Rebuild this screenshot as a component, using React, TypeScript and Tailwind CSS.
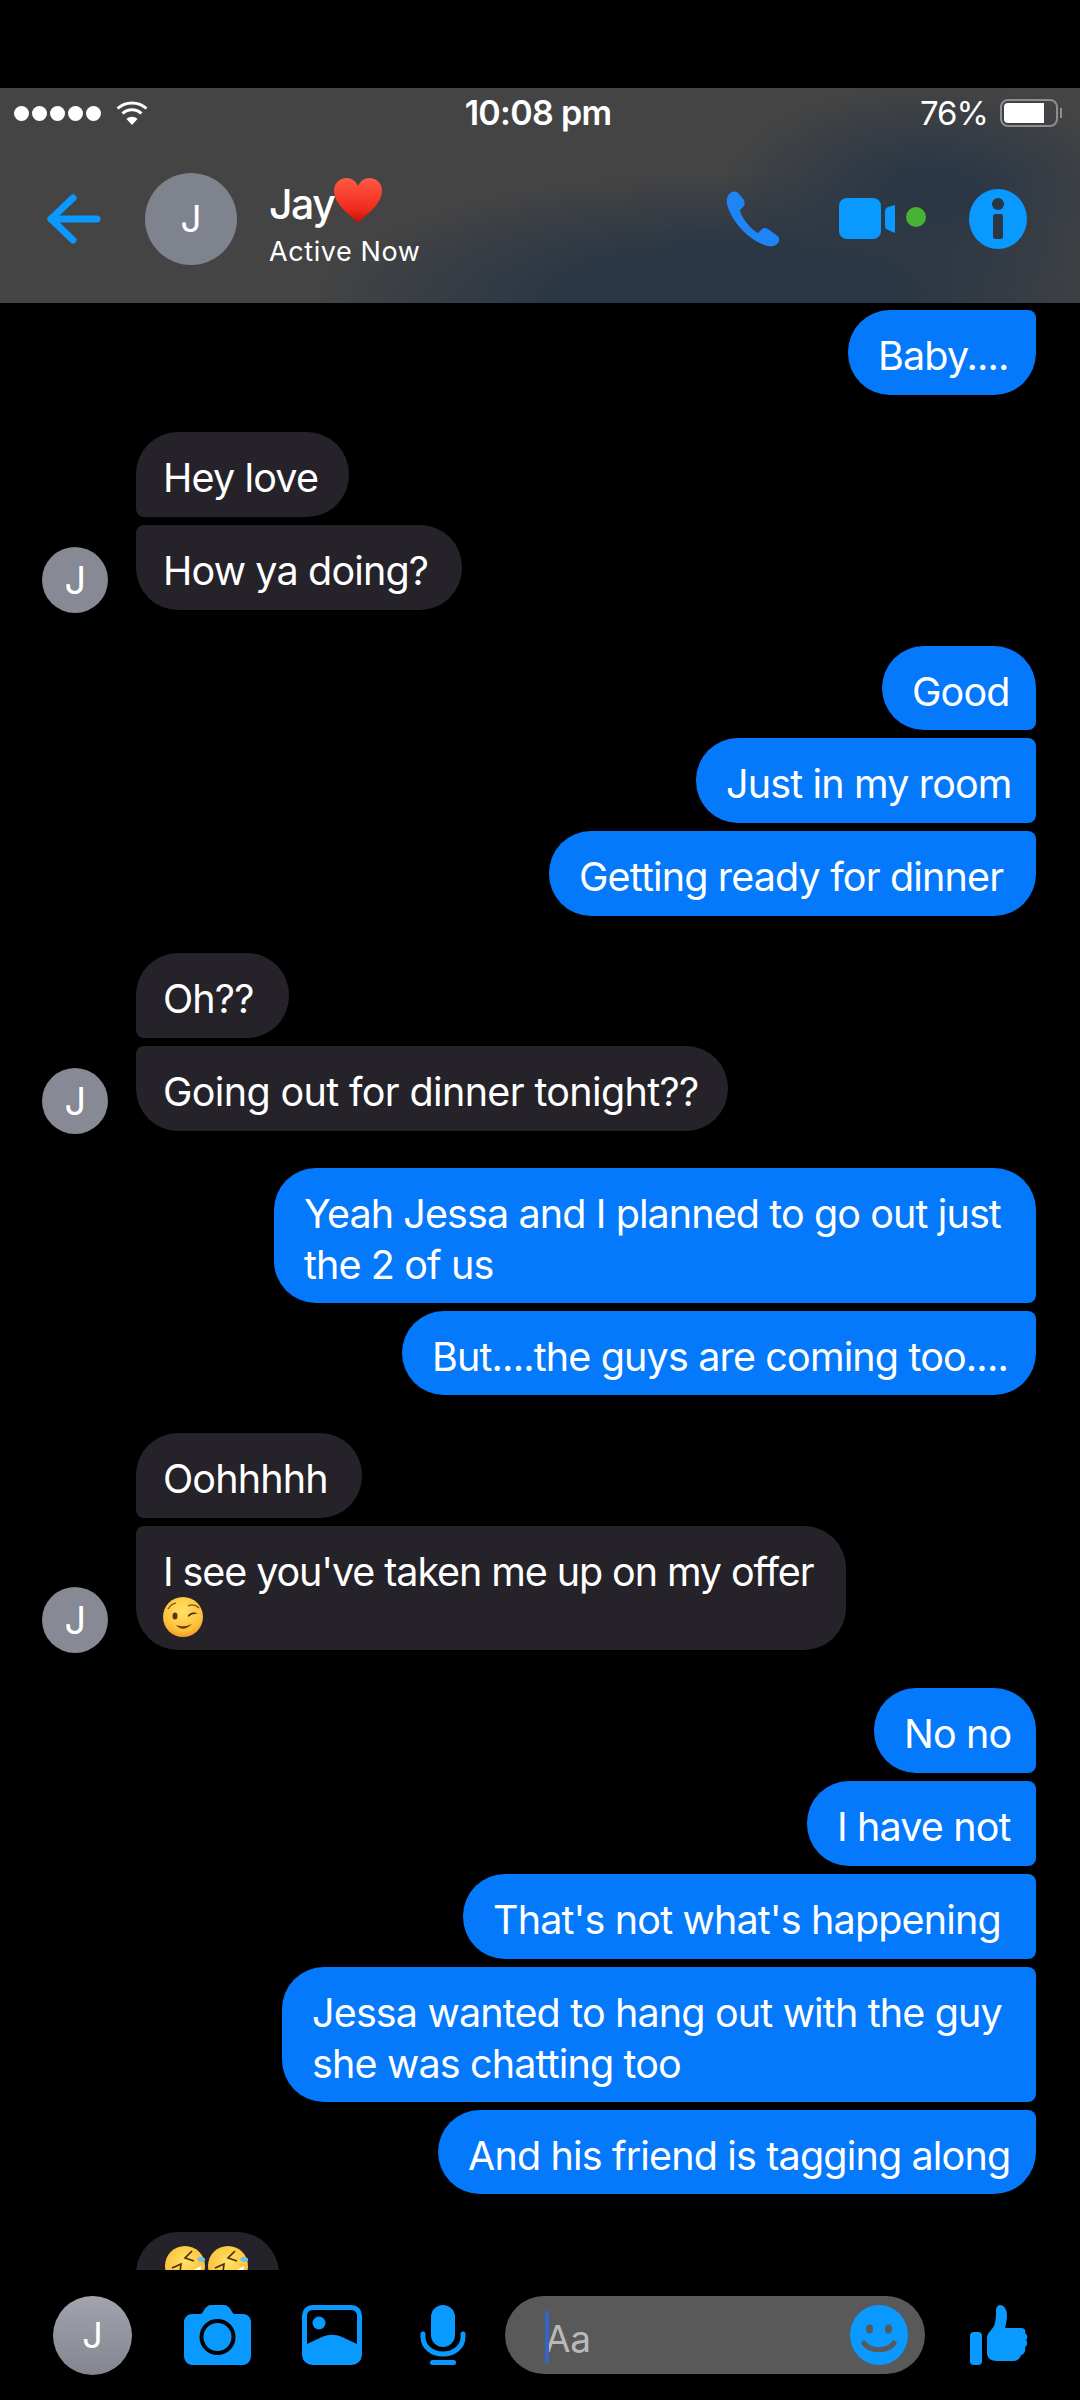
import type { ReactNode } from "react";

const font = "font-['Inter','Liberation_Sans',sans-serif]";

const Heart = () => (
  <svg width="50" height="48" viewBox="0 0 50 48" className="-ml-[1px] mt-[-6px]">
    <defs>
      <linearGradient id="heart" x1="0" y1="0" x2="0" y2="1">
        <stop offset="0" stopColor="#ff5a45" />
        <stop offset="0.7" stopColor="#f02a1c" />
        <stop offset="1" stopColor="#b81408" />
      </linearGradient>
    </defs>
    <path
      d="M25 46C18 39 2 28 1 15C.5 6 7 1 13.500 1C18.500 1 23 4 25 9C27 4 31.500 1 36.500 1C43 1 49.500 6 49 15C48 28 32 39 25 46Z"
      fill="url(#heart)"
    />
  </svg>
);

const WinkEmoji = () => (
  <svg width="40" height="40" viewBox="0 0 40 40">
    <defs>
      <radialGradient id="wink" cx="0.5" cy="0.35" r="0.7">
        <stop offset="0" stopColor="#ffe169" />
        <stop offset="0.7" stopColor="#fdc23a" />
        <stop offset="1" stopColor="#ee8f1c" />
      </radialGradient>
    </defs>
    <circle cx="20" cy="20" r="20" fill="url(#wink)" />
    <path d="M5 12Q8 7 13 6" stroke="#7a4a12" strokeWidth="1.200" fill="none" />
    <path d="M25 9Q31 6 36 11" stroke="#7a4a12" strokeWidth="1.200" fill="none" />
    <ellipse cx="12" cy="19" rx="2.500" ry="3.500" fill="#5a3410" />
    <path d="M25 18Q30 13 35 17Q30 16 25 20Z" fill="#5a3410" />
    <path d="M13 28Q20 36 29 27Q21 31 13 28Z" fill="#6b3d10" />
  </svg>
);

const RoflEmoji = () => (
  <svg width="40" height="40" viewBox="0 0 40 40" className="shrink-0">
    <defs>
      <radialGradient id="rofl" cx="0.5" cy="0.4" r="0.7">
        <stop offset="0" stopColor="#ffe169" />
        <stop offset="0.75" stopColor="#fdc23a" />
        <stop offset="1" stopColor="#ee8f1c" />
      </radialGradient>
    </defs>
    <circle cx="20" cy="20" r="20" fill="url(#rofl)" />
    <path d="M7 22L16 18L15 26" stroke="#4a2a0c" strokeWidth="1.600" fill="none" />
    <path d="M27 5L20 12L29 15" stroke="#4a2a0c" strokeWidth="1.600" fill="none" />
    <path d="M14 33L36 20L34 34Z" fill="#fff" />
    <path d="M32 13C34 10 38 11 41 13C39 17 34 17 32 13Z" fill="#6cc4e8" />
  </svg>
);

const Avatar = ({ className, text }: { className: string; text: string }) => (
  <div className={`flex items-center justify-center rounded-full text-white shrink-0 ${className} ${text}`}>
    J
  </div>
);

type Pos = "first" | "mid" | "last";

const ownShape: Record<Pos, string> = {
  first: "rounded-[42px] rounded-br-[8px]",
  mid: "rounded-l-[42px] rounded-r-[8px]",
  last: "rounded-[42px] rounded-tr-[8px]",
};

const theirShape: Record<Pos, string> = {
  first: "rounded-[42px] rounded-bl-[8px]",
  mid: "rounded-r-[42px] rounded-l-[8px]",
  last: "rounded-[42px] rounded-tl-[8px]",
};

const Mine = ({ w, pos, children }: { w: string; pos: Pos; children: ReactNode }) => (
  <div className={`self-end bg-[#0579fb] text-white pl-[30px] pt-[21px] pb-[13.850px] ${w} ${ownShape[pos]}`}>{children}</div>
);

const Theirs = ({ w, pos, children }: { w: string; pos: Pos; children: ReactNode }) => (
  <div className={`bg-[#252329] text-white pl-[27px] pt-[21px] pb-[13.850px] ${w} ${theirShape[pos]}`}>{children}</div>
);

const TheirGroup = ({ children }: { children: ReactNode }) => (
  <div className="flex items-end gap-[28px] pl-[42px]">
    <Avatar className="w-[66px] h-[66px] mb-[-3px] bg-[#878a94]" text="text-[38px]" />
    <div className="flex flex-col gap-[8px]">{children}</div>
  </div>
);

const Header = () => (
  <div className="h-[215px] bg-[#444444] bg-[radial-gradient(ellipse_210px_110px_at_930px_105px,#2b3745_20%,transparent_100%),radial-gradient(ellipse_420px_130px_at_730px_215px,#2a3644_40%,transparent_100%)]">
    <div className="flex items-center justify-between h-[50px] pl-[14px] pr-[18px]">
      <div className="flex items-center gap-[15px] w-[250px]">
        <div className="flex gap-[3px]">
          {[0, 1, 2, 3, 4].map((i) => (
            <span key={i} className="w-[15px] h-[15px] rounded-full bg-white" />
          ))}
        </div>
        <svg width="32" height="26" viewBox="0 0 32 26" fill="none" stroke="#fff" strokeWidth="3">
          <path d="M1.500 8.500C9.500 1 22.500 1 30.500 8.500" />
          <path d="M6.500 13.500C12 8.500 20 8.500 25.500 13.500" />
          <path d="M16 25L10.500 19C13.500 16 18.500 16 21.500 19Z" fill="#fff" stroke="none" />
        </svg>
      </div>
      <div className="text-white text-[34px] font-semibold leading-none tracking-[-0.7px]">10:08 pm</div>
      <div className="flex items-center justify-end gap-[12px] w-[250px]">
        <span className="text-white text-[33px] leading-none tracking-[-1px]">76%</span>
        <div className="flex items-center gap-[2px]">
          <div className="w-[58px] h-[28px] rounded-[8px] border-2 border-[#8d8d8d] p-[2px]">
            <div className="w-[40px] h-full bg-white rounded-l-[4px]" />
          </div>
          <div className="w-[2px] h-[10px] bg-[#8d8d8d]" />
        </div>
      </div>
    </div>
    <div className="flex items-center h-[140px] pl-[47px] pr-[53px] pt-[22px]">
      <svg width="54" height="50" viewBox="0 0 54 50" fill="none" stroke="#0a99ff" strokeWidth="7" strokeLinecap="round" strokeLinejoin="round">
        <path d="M4 25H50" />
        <path d="M26 4L4 25L26 46" />
      </svg>
      <Avatar className="w-[92px] h-[92px] ml-[44px] bg-[#7f838d]" text="text-[37px]" />
      <div className="ml-[32px] text-white pt-[15px]">
        <div className="flex items-center h-[46px] text-[41px] font-medium tracking-[-1.500px] leading-none">
          Jay
          <Heart />
        </div>
        <div className="text-[27px] tracking-[0.6px] leading-[40px] mt-[5px]">Active Now</div>
      </div>
      <div className="ml-auto flex items-center">
        <svg width="54" height="56" viewBox="0 0 54 56">
          <path
            d="M6 1C2 3 0 7 1 13C4 27 20 49 42 55C47 56 52 54 53 50C54 47 52 45 49 43L42 38C39 36 37 37 35 39L32 42C27 40 15 27 14 19L17 16C19 14 19 12 18 9L13 3C11 0 8 0 6 1Z"
            fill="#1f84f5"
          />
        </svg>
        <svg width="88" height="44" viewBox="0 0 88 44" className="ml-[59px]">
          <rect x="0" y="1" width="42" height="41" rx="8" fill="#0a99ff" />
          <path d="M46 14C46 12 47 11 49 10L56 8V36L49 33C47 32 46 31 46 29Z" fill="#0a99ff" />
          <circle cx="77" cy="20" r="10" fill="#46b332" />
        </svg>
        <svg width="58" height="60" viewBox="0 0 58 60" className="ml-[42px]">
          <ellipse cx="29" cy="30" rx="29" ry="30" fill="#0a99ff" />
          <circle cx="29" cy="15" r="6" fill="#2a3644" />
          <rect x="24" y="25" width="10" height="25" rx="2.500" fill="#2a3644" />
        </svg>
      </div>
    </div>
  </div>
);

const SecondLine = ({ children }: { children: ReactNode }) => (
  <span className="block mt-[1.500px] -mb-[1.500px]">{children}</span>
);

const Messages = () => (
  <div className="h-[1967px] overflow-hidden flex flex-col pr-[44px] text-[39.500px] leading-[50px] tracking-[-0.85px]">
    <div className="mt-[7px] flex flex-col">
      <Mine w="w-[188px]" pos="last">Baby....</Mine>
    </div>
    <div className="mt-[37px]">
      <TheirGroup>
        <Theirs w="w-[213px]" pos="first">Hey love</Theirs>
        <Theirs w="w-[326px]" pos="last">How ya doing?</Theirs>
      </TheirGroup>
    </div>
    <div className="mt-[36px] flex flex-col gap-[8px]">
      <Mine w="w-[154px]" pos="first">Good</Mine>
      <Mine w="w-[340px]" pos="mid">Just in my room</Mine>
      <Mine w="w-[487px]" pos="last">Getting ready for dinner</Mine>
    </div>
    <div className="mt-[37px]">
      <TheirGroup>
        <Theirs w="w-[153px]" pos="first">Oh??</Theirs>
        <Theirs w="w-[592px] tracking-[-0.65px]" pos="last">Going out for dinner tonight??</Theirs>
      </TheirGroup>
    </div>
    <div className="mt-[37px] flex flex-col gap-[8px]">
      <Mine w="w-[762px] tracking-[-0.9px]" pos="first">
        Yeah Jessa and I planned to go out just
        <SecondLine>the 2 of us</SecondLine>
      </Mine>
      <Mine w="w-[634px]" pos="last">But....the guys are coming too....</Mine>
    </div>
    <div className="mt-[38px]">
      <TheirGroup>
        <Theirs w="w-[226px]" pos="first">Oohhhhh</Theirs>
        <Theirs w="w-[710px] tracking-[-1.100px]" pos="last">
          I see you've taken me up on my offer
          <div className="h-[39px]">
            <WinkEmoji />
          </div>
        </Theirs>
      </TheirGroup>
    </div>
    <div className="mt-[38px] flex flex-col gap-[8px]">
      <Mine w="w-[162px]" pos="first">No no</Mine>
      <Mine w="w-[229px]" pos="mid">I have not</Mine>
      <Mine w="w-[573px]" pos="mid">That's not what's happening</Mine>
      <Mine w="w-[754px]" pos="mid">
        Jessa wanted to hang out with the guy
        <SecondLine>she was chatting too</SecondLine>
      </Mine>
      <Mine w="w-[598px]" pos="last">And his friend is tagging along</Mine>
    </div>
    <div className="mt-[38px] ml-[136px] w-[143px] h-[84px] shrink-0 rounded-[42px] rounded-bl-[8px] bg-[#252329] pl-[29px] pt-[14px] flex gap-[3px]">
      <RoflEmoji />
      <RoflEmoji />
    </div>
  </div>
);

const Composer = () => (
  <div className="flex items-center h-[130px] bg-black pl-[53px]">
    <Avatar className="w-[79px] h-[79px] bg-gradient-to-b from-[#a1a4ad] to-[#84868f]" text="text-[36px]" />
    <svg width="67" height="60" viewBox="0 0 67 60" className="ml-[52px]">
      <path
        fillRule="evenodd"
        d="M8 9H16C18 9 19 7 20 5C22 2 24 0 27 0H40C43 0 45 2 47 5C48 7 49 9 51 9H59C63 9 67 12 67 17V51C67 56 63 60 59 60H8C4 60 0 56 0 51V17C0 12 4 9 8 9ZM33.500 14A17 17 0 1 0 33.500 50A17 17 0 1 0 33.500 14ZM33.500 18A14 14 0 1 1 33.500 46A14 14 0 1 1 33.500 18Z"
        fill="#0a99ff"
      />
      <circle cx="33.500" cy="32" r="12" fill="#0a99ff" />
    </svg>
    <svg width="60" height="60" viewBox="0 0 60 60" className="ml-[51px]">
      <rect x="2.500" y="2.500" width="55" height="55" rx="8" fill="none" stroke="#0a99ff" strokeWidth="5" />
      <path d="M5 39L20 32C27 29 33 29 40 32L55 39V55H5Z" fill="#0a99ff" />
      <circle cx="17" cy="18" r="6.500" fill="#0a99ff" />
    </svg>
    <svg width="46" height="60" viewBox="0 0 46 60" className="ml-[58px]" fill="none">
      <rect x="11" y="0" width="24" height="42" rx="12" fill="#0a99ff" />
      <path d="M3 29V32C3 42 12 49 23 49C34 49 43 42 43 32V29" stroke="#0a99ff" strokeWidth="5" strokeLinecap="round" />
      <rect x="10" y="55" width="26" height="5" rx="2.500" fill="#0a99ff" />
    </svg>
    <div className="ml-[39px] w-[420px] h-[78px] rounded-full bg-[#595959] flex items-center pl-[40px] pr-[17px]">
      <div className="relative top-[3px] text-[37px] leading-none text-[#b9b9b9] tracking-[-0.2px]">
        <span className="absolute left-0 top-[-9px] w-[4px] h-[52px] bg-[#3565c9]" />
        Aa
      </div>
      <svg width="58" height="60" viewBox="0 0 58 60" className="ml-auto">
        <ellipse cx="29" cy="30" rx="29" ry="30" fill="#0a99ff" />
        <ellipse cx="19.500" cy="24" rx="3.500" ry="4.500" fill="#595959" />
        <ellipse cx="38.500" cy="24" rx="3.500" ry="4.500" fill="#595959" />
        <path d="M14 38C20 47 38 47 44 38" fill="none" stroke="#595959" strokeWidth="5" strokeLinecap="round" />
      </svg>
    </div>
    <svg width="58" height="60" viewBox="0 0 58 60" className="ml-[45px]">
      <rect x="0" y="27" width="12" height="33" rx="4" fill="#0a99ff" />
      <path
        d="M17 33C17 28 21 26 24 21C26 17 26 9 26 5C26 2 28 0 30 0C34 0 37 4 37 11C37 15 36 19 35 23H51C55 23 56 26 55 28C58 30 58 33 56 35C58 37 57 41 55 42C56 46 54 50 51 50C50 54 47 56 42 56H27C21 56 17 53 17 48Z"
        fill="#0a99ff"
      />
    </svg>
  </div>
);

export default function App() {
  return (
    <div className={`w-[1080px] h-[2400px] bg-black pt-[88px] overflow-hidden ${font}`}>
      <Header />
      <Messages />
      <Composer />
    </div>
  );
}
